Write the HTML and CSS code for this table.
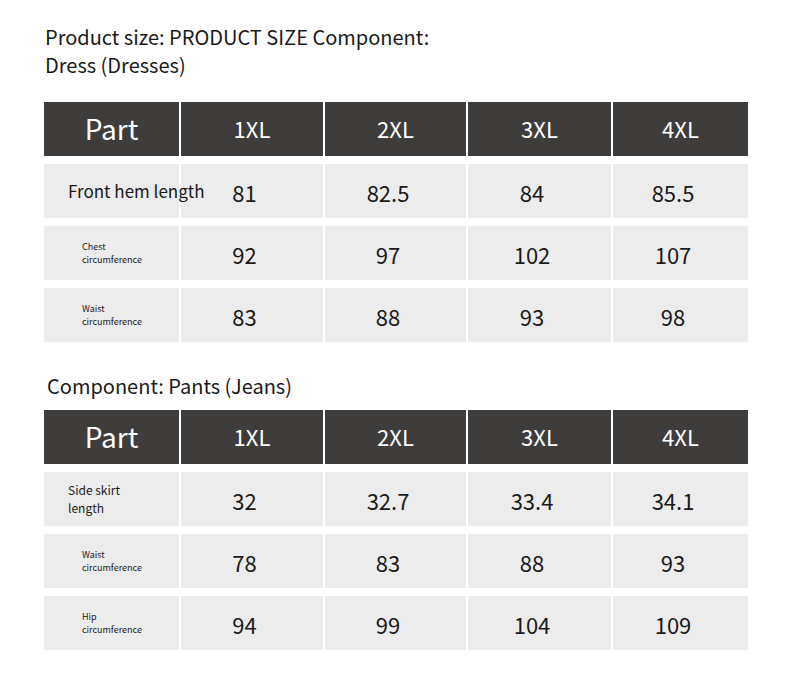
FILE: index.html
```html
<!DOCTYPE html>
<html lang="en">
<head>
    <meta charset="UTF-8">
    <title>Size Chart</title>
    <link rel="stylesheet" href="styles.css">
</head>
<body>
    <div class="page">
        <h2 class="title first">Product size: PRODUCT SIZE Component:<br>Dress (Dresses)</h2>
        <div class="size-table">
            <div class="head part">Part</div>
            <div class="head">1XL</div>
            <div class="head">2XL</div>
            <div class="head">3XL</div>
            <div class="head">4XL</div>

            <div class="cell label big">Front hem length</div>
            <div class="cell num">81</div>
            <div class="cell num">82.5</div>
            <div class="cell num">84</div>
            <div class="cell num">85.5</div>

            <div class="cell label small">Chest<br>circumference</div>
            <div class="cell num">92</div>
            <div class="cell num">97</div>
            <div class="cell num">102</div>
            <div class="cell num">107</div>

            <div class="cell label small">Waist<br>circumference</div>
            <div class="cell num">83</div>
            <div class="cell num">88</div>
            <div class="cell num">93</div>
            <div class="cell num">98</div>
        </div>

        <h2 class="title second">Component: Pants (Jeans)</h2>
        <div class="size-table">
            <div class="head part">Part</div>
            <div class="head">1XL</div>
            <div class="head">2XL</div>
            <div class="head">3XL</div>
            <div class="head">4XL</div>

            <div class="cell label medium">Side skirt<br>length</div>
            <div class="cell num">32</div>
            <div class="cell num">32.7</div>
            <div class="cell num">33.4</div>
            <div class="cell num">34.1</div>

            <div class="cell label small">Waist<br>circumference</div>
            <div class="cell num">78</div>
            <div class="cell num">83</div>
            <div class="cell num">88</div>
            <div class="cell num">93</div>

            <div class="cell label small">Hip<br>circumference</div>
            <div class="cell num">94</div>
            <div class="cell num">99</div>
            <div class="cell num">104</div>
            <div class="cell num">109</div>
        </div>
    </div>
</body>
</html>
```

FILE: styles.css
```css
body {
    margin: 0;
    background-color: #ffffff;
    font-family: "Noto Sans CJK SC", "Noto Sans", sans-serif;
    color: #1a1a1a;
}
.page {
    width: 704px;
    padding: 23px 0 0 44px;
}
.title {
    font-size: 20px;
    font-weight: normal;
    line-height: 28px;
    margin: 0;
    padding-left: 1px;
}
.title.first {
    margin-bottom: 23px;
}
.title.second {
    margin: 30px 0 10px;
    padding-left: 3px;
}
.size-table {
    display: grid;
    grid-template-columns: 135px 142px 141px 143px 135px;
    grid-auto-rows: 54px;
    column-gap: 2px;
    row-gap: 8px;
}
.head {
    background-color: #3f3d3c;
    color: #ffffff;
    font-size: 22px;
    display: flex;
    align-items: center;
    justify-content: center;
    padding-bottom: 3px;
}
.head.part {
    font-size: 28px;
}
.cell {
    background-color: #edecec;
    display: flex;
    align-items: center;
}
.num {
    justify-content: center;
    font-size: 22px;
    padding: 1px 15px 0 0;
}
/* labels may run into the next cell, keep them above its background */
.label {
    white-space: nowrap;
    position: relative;
    z-index: 1;
}
.label.big {
    font-size: 17px;
    padding-left: 24px;
    padding-bottom: 2px;
}
.label.medium {
    font-size: 12px;
    line-height: 18px;
    padding-left: 24px;
}
.label.small {
    font-size: 9px;
    line-height: 13px;
    padding-left: 38px;
}
```
